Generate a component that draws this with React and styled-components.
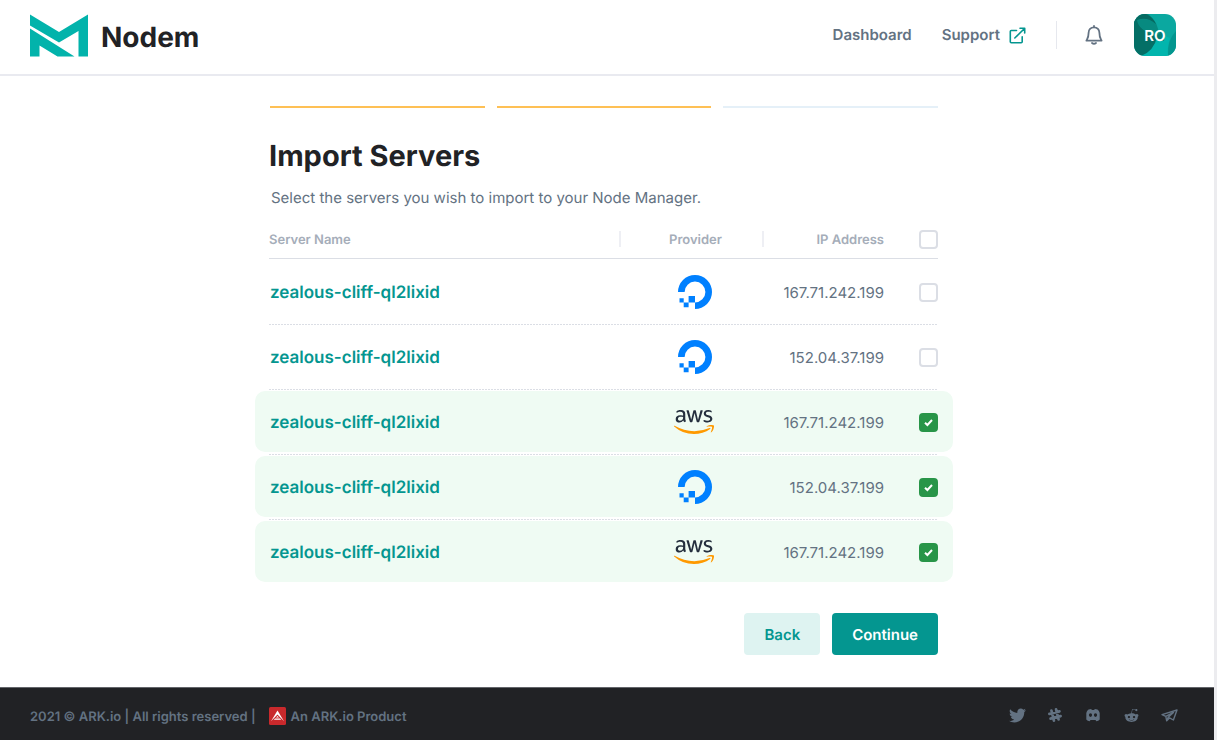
import React, { useState } from "react";
import styled, { createGlobalStyle, css } from "styled-components";
import { FaAws, FaTwitter, FaRedditAlien } from "react-icons/fa";

const GlobalStyle = createGlobalStyle`
  *, *::before, *::after { box-sizing: border-box; }
  body { margin: 0; background: #fff; }
  body, button, input {
    font-family: Inter, "Liberation Sans", sans-serif;
    text-rendering: geometricPrecision;
  }
`;

const stack = css`
  display: inline-grid;
  place-items: center;
  > * { grid-area: 1 / 1; }
`;

const Page = styled.div`
  min-height: 100vh;
  display: flex;
  flex-direction: column;
  border-right: 3px solid #ececef;
  color: #212225;
`;

const Header = styled.header`
  display: flex;
  align-items: center;
  justify-content: space-between;
  height: 76px;
  padding: 0 38px 4px 30px;
  border-bottom: 2px solid #e9eaf0;
`;

const Brand = styled.a`
  display: flex;
  align-items: flex-end;
  gap: 13px;
  color: #212225;
  font-size: 28px;
  font-weight: 700;
  line-height: 40px;
  text-decoration: none;
`;

const Nav = styled.nav`
  display: flex;
  align-items: center;
`;

const NavLink = styled.a`
  display: flex;
  align-items: center;
  gap: 9px;
  margin-right: 30px;
  color: #637282;
  font-size: 15px;
  font-weight: 600;
  line-height: 26px;
  text-decoration: none;
`;

const NavDivider = styled.span`
  width: 1px;
  height: 28px;
  background: #e6e8ee;
`;

const IconButton = styled.button`
  display: grid;
  place-items: center;
  margin: 0 29px 0 26px;
  padding: 2px;
  border: 0;
  background: none;
  color: #637282;
`;

const Avatar = styled.button`
  ${stack}
  width: 42px;
  height: 42px;
  padding: 0;
  border: 0;
  border-radius: 11px;
  overflow: hidden;
  color: #fff;
  font-size: 15px;
  font-weight: 600;
`;

const Main = styled.main`
  flex: 1;
  padding: 30px 37px 32px 30px;
`;

const Content = styled.div`
  max-width: 669px;
  margin: 0 auto;
`;

const Steps = styled.div`
  display: flex;
  gap: 12px;
  padding-left: 1px;
`;

const Step = styled.span`
  flex: 1;
  height: 2px;
  background: ${({ $done }) => ($done ? "#fec055" : "#e5f0f8")};
`;

const Title = styled.h1`
  margin: 30px 0 0;
  font-size: 29px;
  font-weight: 700;
  line-height: 36px;
`;

const Intro = styled.p`
  margin: 12px 0 0;
  padding-left: 2px;
  color: #637282;
  font-size: 15px;
  line-height: 24px;
`;

const Table = styled.table`
  width: 100%;
  margin-top: 10px;
  border-collapse: separate;
  border-spacing: 0;
  table-layout: fixed;
`;

const HeadCell = styled.th`
  width: ${({ $width }) => $width || "auto"};
  height: 39px;
  padding: 0;
  border-bottom: 1px solid #dbdee5;
  color: #a5adb9;
  font-size: 13px;
  font-weight: 600;
  text-align: ${({ $align }) => $align || "left"};
`;

const HeadLabel = styled.span`
  display: block;
  height: 16px;
  padding-left: ${({ $inset }) => ($inset ? "8px" : "0")};
  line-height: 18px;
  border-right: ${({ $divided }) => ($divided ? "2px solid #eeeff4" : "0")};
`;

const Row = styled.tr`
  position: relative;
  isolation: isolate;
  height: 65px;

  & + & {
    background: repeating-linear-gradient(90deg, #dbdee5 0 2px, transparent 2px 3px) top / 100% 1px no-repeat;
  }

  ${({ $selected }) => $selected && css`
    > td:first-child::before {
      content: "";
      position: absolute;
      z-index: -1;
      inset: 2px -15px 2px -14px;
      border-radius: 10px;
      background: #effbf3;
    }
  `}
`;

const Cell = styled.td`
  padding: 0;
  text-align: ${({ $align }) => $align || "left"};
`;

const TextCell = styled(Cell)`
  padding-top: 2px;
  color: #637282;
  font-size: 15px;
`;

const LogoCell = styled(Cell)`
  padding-left: 4px;
  text-align: center;
  svg { vertical-align: middle; }
`;

const ServerLink = styled.a`
  padding-left: 1px;
  color: #049690;
  font-size: 17px;
  font-weight: 600;
  text-decoration: none;
`;

const AwsMark = styled(FaAws)`
  width: 40px;
  height: 32px;
  margin-right: 2px;
  path { fill: url(#aws-two-tone); }
`;

const CheckWrap = styled.label`
  ${stack}
  vertical-align: middle;
  svg { pointer-events: none; }
`;

const CheckInput = styled.input`
  appearance: none;
  width: 19px;
  height: 19px;
  margin: 0;
  border: 2px solid #dbdee5;
  border-radius: 4px;
  background: #fff;

  &:checked {
    border-color: #289548;
    background: #289548;
  }
`;

const Actions = styled.div`
  display: flex;
  justify-content: flex-end;
  gap: 12px;
  margin-top: 29px;
`;

const Button = styled.button`
  height: 42px;
  padding: 0 20px;
  border: 0;
  border-radius: 4px;
  background: ${({ $primary }) => ($primary ? "#049690" : "#def3f1")};
  color: ${({ $primary }) => ($primary ? "#fff" : "#049690")};
  font-size: 15px;
  font-weight: 600;
`;

const Footer = styled.footer`
  display: flex;
  align-items: center;
  justify-content: space-between;
  height: 53px;
  padding: 4px 36px 0 30px;
  border-top: 1px solid #63656a;
  background: #212225;
  color: #637282;
  font-size: 13px;
  font-weight: 600;
`;

const Legal = styled.div`
  display: flex;
  align-items: center;
  gap: 5px;
  line-height: 20px;
  span { padding-top: 2px; }
  svg { margin-left: 8px; }
`;

const Social = styled.div`
  display: flex;
  align-items: center;
  gap: 20px;
`;

const SocialLink = styled.a`
  display: grid;
  place-items: center;
  width: 18px;
  height: 18px;
  margin-bottom: 2px;
  color: #637282;
`;

const LogoMark = () => (
  <svg width="58" height="43" viewBox="0 0 58 43" fill="#02b3ab" aria-hidden="true">
    <path d="M0 0.500L29 18L58 0.500V42.500H48.500V17L29 28.500L0 11.500Z" />
    <path d="M0 14.500L44.500 42.500H27.500L9.500 31.500V42.500H0Z" />
  </svg>
);

const ExternalIcon = () => (
  <svg width="17" height="17" viewBox="0 0 17 17" fill="none" stroke="#049690" strokeWidth="1.600" strokeLinecap="round" strokeLinejoin="round" aria-hidden="true">
    <path d="M7.500 3.500H2.300Q1.300 3.500 1.300 4.500V14.700Q1.300 15.700 2.300 15.700H12.200Q13.200 15.700 13.200 14.700V9.700" />
    <path d="M5.800 11L15.500 1.500M11 1.300H15.700V6" />
  </svg>
);

const BellIcon = () => (
  <svg width="18" height="20" viewBox="0 0 18 20" fill="none" stroke="currentColor" strokeWidth="1.800" strokeLinecap="round" strokeLinejoin="round" aria-hidden="true">
    <path d="M9 1V2.300M9 2.300C5.700 2.300 3.600 4.700 3.600 7.700C3.600 12.400 2.600 13.300 1.400 15.600H16.600C15.400 13.300 14.400 12.400 14.400 7.700C14.400 4.700 12.300 2.300 9 2.300Z" />
    <path d="M7 18Q9 19.600 11 18" />
  </svg>
);

const AvatarArt = () => (
  <svg width="42" height="42" viewBox="0 0 42 42" aria-hidden="true">
    <path fill="#0ba8a0" d="M0 0H42V42H0Z" />
    <path fill="#02b5ad" d="M22 18L36 24Q33 34 34 42H8Z" />
    <path fill="#03968f" d="M42 17Q33 26 34 42H42Z" />
    <path fill="#078a80" d="M0 0H14Q25 8 25 23L17 28L0 8Z" />
    <path fill="#056a61" d="M0 0H12Q19 3 22 10Q13 2 3 6L0 10Z" />
    <path fill="#046f66" d="M3 6Q4 16 23 23Q20 37 7 42H0V6Z" />
    <path fill="#067c74" d="M23 22L28 16Q31 22 30 27L23 25Z" />
  </svg>
);

const DigitalOceanMark = () => (
  <svg width="34" height="34" viewBox="0 0 34 34" fill="#0080ff" role="img" aria-label="DigitalOcean">
    <path d="M17 34V27.400A10.400 10.400 0 1 0 6.600 17H0A17 17 0 1 1 17 34Z" />
    <path d="M10.600 21H17V27.400H10.600ZM5.700 27.400H10.600V32.300H5.700ZM1.500 23.200H5.700V27.400H1.500Z" />
  </svg>
);

const TickIcon = () => (
  <svg width="9" height="9" viewBox="0 0 9 9" fill="none" stroke="#fff" strokeWidth="2" aria-hidden="true">
    <path d="M1 4.700L3.400 7L8 2" />
  </svg>
);

const ArkIcon = () => (
  <svg width="17" height="18" viewBox="0 0 17 18" aria-hidden="true">
    <rect width="17" height="18" rx="1.500" fill="#c9292c" />
    <path fill="#fff" d="M8.500 3.500L15 14.200L8.500 7.400L2 14.200ZM8.500 9L10 10.600H7ZM6 11.500H11L12.200 12.800H4.800Z" />
  </svg>
);

const SlackIcon = () => (
  <svg width="16" height="16" viewBox="0 0 16 16" fill="none" stroke="currentColor" strokeWidth="2.700" strokeLinecap="round" aria-hidden="true">
    <path transform="rotate(-14 8 8)" d="M5.600 2.800V13.200M10.400 2.800V13.200M2.800 5.600H13.200M2.800 10.400H13.200" />
  </svg>
);

const DiscordIcon = () => (
  <svg width="14" height="13" viewBox="0 0 14 13" fill="currentColor" aria-hidden="true">
    <path fillRule="evenodd" d="M2.500 0.500L5.200 0L5.800 1.100H8.200L8.800 0L11.500 0.500Q13.300 1.500 13.700 4V10.500Q12.500 12 10.300 12.300L9.500 10.900H4.500L3.700 12.300Q1.500 12 0.300 10.500V4Q0.700 1.500 2.500 0.500ZM4.500 4.300A1.600 1.800 0 1 0 4.500 7.900A1.600 1.800 0 1 0 4.500 4.300ZM9.500 4.300A1.600 1.800 0 1 0 9.500 7.900A1.600 1.800 0 1 0 9.500 4.300Z" />
  </svg>
);

const TelegramIcon = () => (
  <svg width="17" height="13" viewBox="0 0 17 13" fill="none" stroke="currentColor" strokeWidth="1.400" strokeLinejoin="round" aria-hidden="true">
    <path d="M1 5.600L16 1L12.400 11L8.500 8.900L5.700 11.800L4.800 7.300ZM4.800 7.300L12.500 3.500L7.200 8.300L5.700 11.800" />
  </svg>
);

const Checkbox = ({ label, checked, onChange }) => (
  <CheckWrap>
    <CheckInput type="checkbox" aria-label={label} checked={checked} onChange={onChange} />
    {checked && <TickIcon />}
  </CheckWrap>
);

const servers = [
  { name: "zealous-cliff-ql2lixid", provider: "do", ip: "167.71.242.199" },
  { name: "zealous-cliff-ql2lixid", provider: "do", ip: "152.04.37.199" },
  { name: "zealous-cliff-ql2lixid", provider: "aws", ip: "167.71.242.199" },
  { name: "zealous-cliff-ql2lixid", provider: "do", ip: "152.04.37.199" },
  { name: "zealous-cliff-ql2lixid", provider: "aws", ip: "167.71.242.199" },
];

const socials = [
  { name: "Twitter", icon: <FaTwitter size={17} /> },
  { name: "Slack", icon: <SlackIcon /> },
  { name: "Discord", icon: <DiscordIcon /> },
  { name: "Reddit", icon: <FaRedditAlien size={15} /> },
  { name: "Telegram", icon: <TelegramIcon /> },
];

export default function App() {
  const [selected, setSelected] = useState([false, false, true, true, true]);
  const all = selected.every(Boolean);
  const toggle = (index) => setSelected(selected.map((on, i) => (i === index ? !on : on)));

  return (
    <Page>
      <GlobalStyle />
      <svg width="0" height="0" style={{ position: "absolute" }} aria-hidden="true">
        <linearGradient id="aws-two-tone" gradientUnits="userSpaceOnUse" x1="0" y1="0" x2="0" y2="512">
          <stop offset="0.590" stopColor="#252f3e" />
          <stop offset="0.590" stopColor="#f90" />
        </linearGradient>
      </svg>

      <Header>
        <Brand href="#"><LogoMark />Nodem</Brand>
        <Nav>
          <NavLink href="#">Dashboard</NavLink>
          <NavLink href="#">Support<ExternalIcon /></NavLink>
          <NavDivider />
          <IconButton type="button" aria-label="Notifications"><BellIcon /></IconButton>
          <Avatar type="button"><AvatarArt /><span>RO</span></Avatar>
        </Nav>
      </Header>

      <Main>
        <Content>
          <Steps><Step $done /><Step $done /><Step /></Steps>
          <Title>Import Servers</Title>
          <Intro>Select the servers you wish to import to your Node Manager.</Intro>
          <Table>
            <thead>
              <tr>
                <HeadCell><HeadLabel $divided>Server Name</HeadLabel></HeadCell>
                <HeadCell $width="143px" $align="center"><HeadLabel $divided $inset>Provider</HeadLabel></HeadCell>
                <HeadCell $width="120px" $align="right"><HeadLabel>IP Address</HeadLabel></HeadCell>
                <HeadCell $width="54px" $align="right">
                  <Checkbox label="Select all servers" checked={all} onChange={() => setSelected(selected.map(() => !all))} />
                </HeadCell>
              </tr>
            </thead>
            <tbody>
              {servers.map((server, i) => (
                <Row key={i} $selected={selected[i]}>
                  <TextCell><ServerLink href="#">{server.name}</ServerLink></TextCell>
                  <LogoCell>
                    {server.provider === "aws" ? <AwsMark role="img" aria-label="AWS" /> : <DigitalOceanMark />}
                  </LogoCell>
                  <TextCell $align="right">{server.ip}</TextCell>
                  <Cell $align="right">
                    <Checkbox label={`Select ${server.name} at ${server.ip}`} checked={selected[i]} onChange={() => toggle(i)} />
                  </Cell>
                </Row>
              ))}
            </tbody>
          </Table>
          <Actions>
            <Button type="button">Back</Button>
            <Button type="button" $primary>Continue</Button>
          </Actions>
        </Content>
      </Main>

      <Footer>
        <Legal>
          <span>2021 © ARK.io | All rights reserved |</span>
          <ArkIcon />
          <span>An ARK.io Product</span>
        </Legal>
        <Social>
          {socials.map(({ name, icon }) => (
            <SocialLink key={name} href="#" aria-label={name}>{icon}</SocialLink>
          ))}
        </Social>
      </Footer>
    </Page>
  );
}
